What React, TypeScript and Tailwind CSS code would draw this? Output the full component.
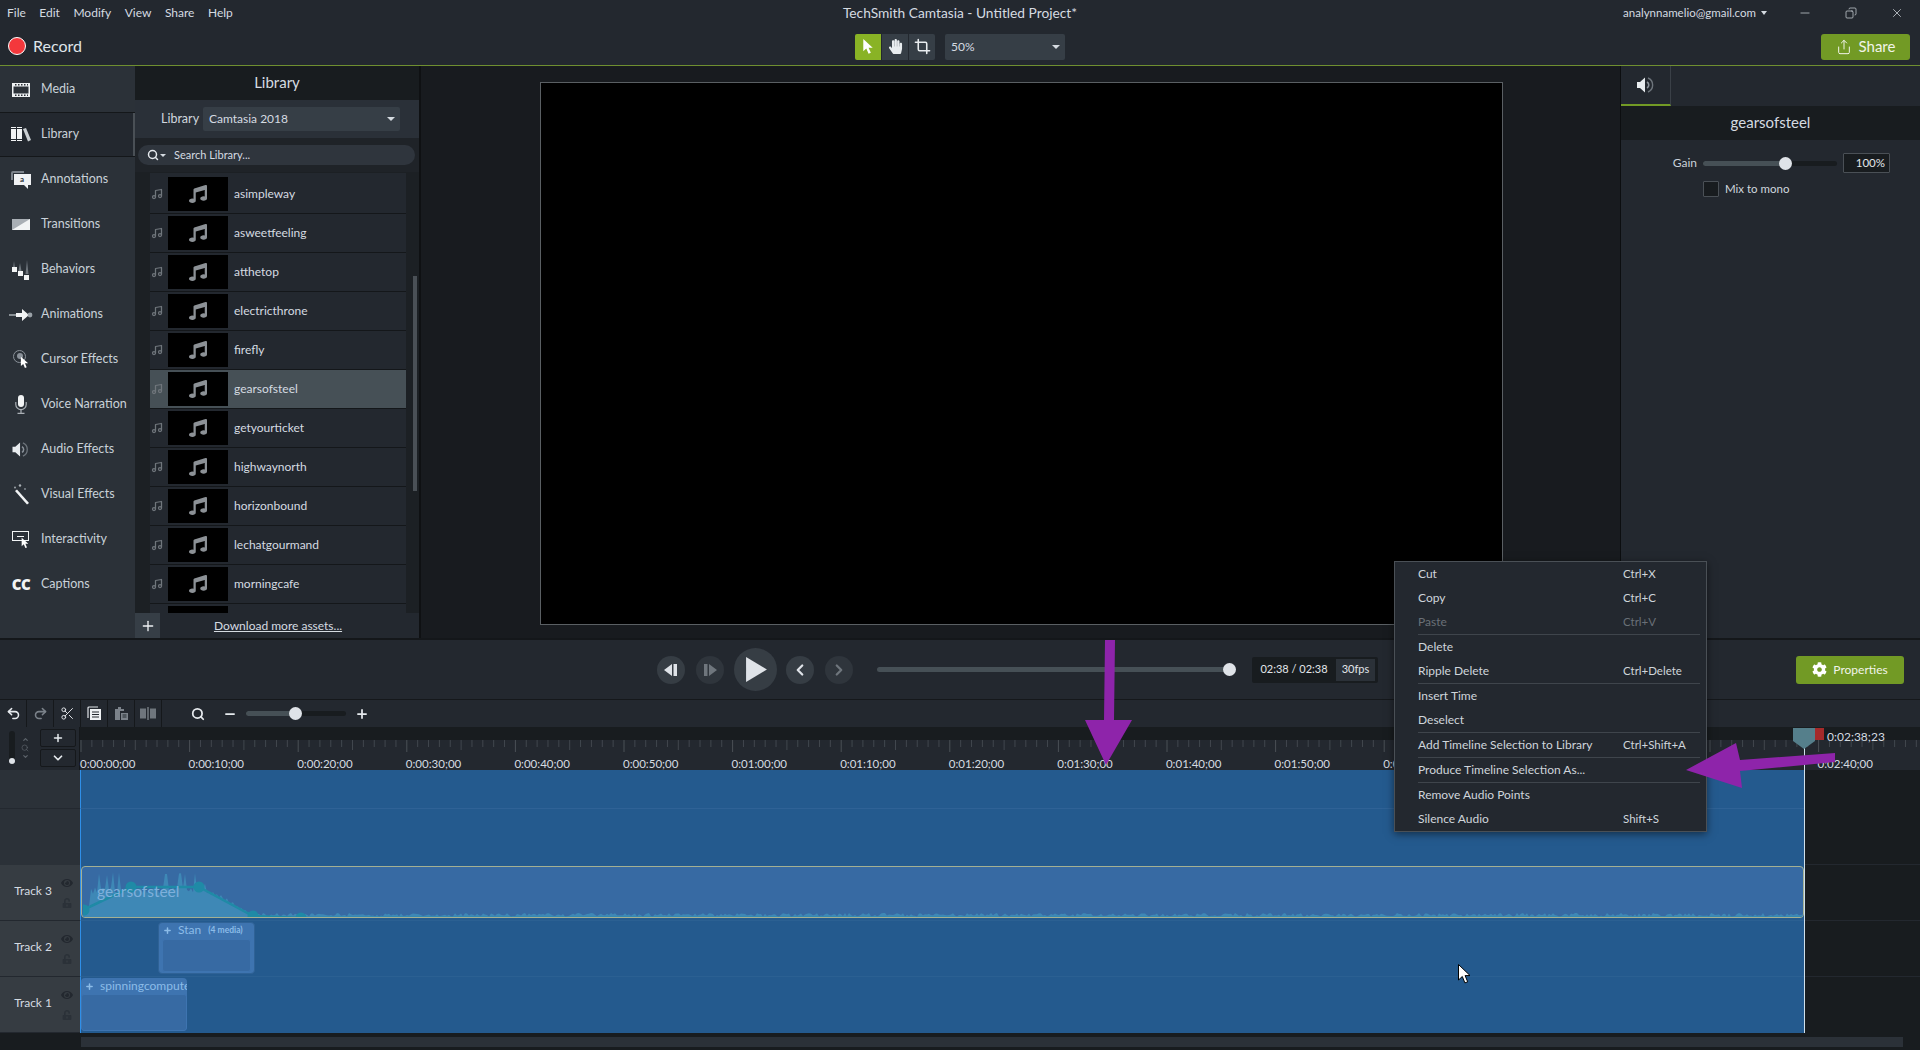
import { Crop, Search, Minus, Plus, ChevronDown, Undo2, Redo2, Scissors, Music, Share, X, Copy, ChevronLeft, ChevronRight, ChevronUp } from "lucide-react";
import { FaMusic, FaCog, FaHandPaper, FaEye, FaUnlockAlt } from "react-icons/fa";

const MENU = ["File", "Edit", "Modify", "View", "Share", "Help"];
const TRACKS_LIB = ["asimpleway", "asweetfeeling", "atthetop", "electricthrone", "firefly", "gearsofsteel", "getyourticket", "highwaynorth", "horizonbound", "lechatgourmand", "morningcafe", ""];
const RULER = ["0:00:00;00", "0:00:10;00", "0:00:20;00", "0:00:30;00", "0:00:40;00", "0:00:50;00", "0:01:00;00", "0:01:10;00", "0:01:20;00", "0:01:30;00", "0:01:40;00", "0:01:50;00", "0:02:00;00", "0:02:10;00", "0:02:20;00", "0:02:30;00", "0:02:40;00"];

const CTX: { label: string; keys?: string; off?: boolean; sep?: boolean }[] = [
  { label: "Cut", keys: "Ctrl+X" },
  { label: "Copy", keys: "Ctrl+C" },
  { label: "Paste", keys: "Ctrl+V", off: true, sep: true },
  { label: "Delete" },
  { label: "Ripple Delete", keys: "Ctrl+Delete", sep: true },
  { label: "Insert Time" },
  { label: "Deselect", sep: true },
  { label: "Add Timeline Selection to Library", keys: "Ctrl+Shift+A", sep: true },
  { label: "Produce Timeline Selection As...", sep: true },
  { label: "Remove Audio Points" },
  { label: "Silence Audio", keys: "Shift+S" },
];

function Cursor({ className }: { className?: string }) {
  return (
    <svg viewBox="0 0 12 18" className={className}>
      <path d="M1 1v13l3.2-3 2.4 5.6 2.4-1-2.4-5.4H11z" fill="#fff" />
    </svg>
  );
}

function Speaker({ className }: { className?: string }) {
  return (
    <svg viewBox="0 0 20 18" className={className}>
      <path d="M1 6h3l5-4.5v15L4 12H1z" fill="#e8ecef" />
      <path d="M11 6a3.4 3.4 0 0 1 0 6" fill="none" stroke="#8a9199" strokeWidth="1.6" />
      <path d="M12 2a7.6 7.6 0 0 1 0 14" fill="none" stroke="#6d747b" strokeWidth="1.4" />
    </svg>
  );
}

const SIDE_ICONS: Record<string, React.ReactNode> = {
  Media: (
    <svg viewBox="0 0 18 14" className="w-[18px] h-[14px]">
      <path fillRule="evenodd" d="M0 0h18v14H0zM1.5 3.5v7h15v-7z" fill="#eef1f3" />
      <path d="M3 1h1.5v1.5H3zM6 1h1.5v1.5H6zM9 1h1.5v1.5H9zM12 1h1.5v1.5H12zM15 1h1v1.5h-1zM3 11.5h1.5V13H3zM6 11.5h1.5V13H6zM9 11.5h1.5V13H9zM12 11.5h1.5V13H12zM15 11.5h1V13h-1z" fill="#2b3138" />
    </svg>
  ),
  Library: (
    <svg viewBox="0 0 20 15" className="w-[20px] h-[15px]">
      <path d="M0 2h5v10H0zM6 2h5v10H6z" fill="#f2f4f5" />
      <path d="M0 0h5v1H0zM6 0h5v1H6zM0 13h5v1H0zM6 13h5v1H6z" fill="#f2f4f5" />
      <path d="M12 2l3-1 5 12-3 1.4z" fill="#c9ced2" />
    </svg>
  ),
  Annotations: (
    <svg viewBox="0 0 20 18" className="w-[20px] h-[18px]">
      <path d="M0 2a2 2 0 0 1 2-2h11v2H2v7H0z" fill="#7b828a" />
      <path d="M3 3h17v11h-3v4l-4-4H3z" fill="#f0f2f4" />
      <text x="9" y="11" fontSize="8" fontFamily="Lato" fill="#2b3138" fontWeight="700">a</text>
    </svg>
  ),
  Transitions: (
    <svg viewBox="0 0 18 11" className="w-[18px] h-[11px]">
      <path d="M0 0h18v11H0z" fill="#a9afb5" />
      <path d="M18 0v11H0z" fill="#f2f4f5" />
    </svg>
  ),
  Behaviors: (
    <svg viewBox="0 0 18 22" className="w-[18px] h-[22px]">
      <path d="M2 2l1 7H1zM8 4l1.5 8h-3zM15 1l1.5 14h-3z" fill="#6e757c" />
      <rect x="0" y="8" width="5" height="5" fill="#f2f4f5" />
      <rect x="6" y="12" width="5" height="5" fill="#f2f4f5" />
      <rect x="12" y="16" width="5" height="5" fill="#f2f4f5" />
    </svg>
  ),
  Animations: (
    <svg viewBox="0 0 24 12" className="w-[24px] h-[12px]">
      <path d="M0 6h12" stroke="#aab0b5" strokeWidth="1.5" />
      <path d="M7 4h6V0l7 6-7 6V8H7z" fill="#f2f4f5" />
      <circle cx="21" cy="6" r="2.4" fill="#9aa1a7" />
    </svg>
  ),
  "Cursor Effects": (
    <div className="relative w-[16px] h-[20px]">
      <div className="absolute top-0 left-0 w-[13px] h-[13px] rounded-full border border-[#8a9199] flex items-center justify-center">
        <div className="w-[6px] h-[6px] rounded-full bg-[#8a9199]" />
      </div>
      <Cursor className="absolute left-[7px] top-[6px] w-[9px] h-[13px]" />
    </div>
  ),
  "Voice Narration": (
    <svg viewBox="0 0 12 19" className="w-[12px] h-[19px]">
      <rect x="3" y="0" width="6" height="12" rx="3" fill="#f2f4f5" />
      <path d="M.8 7v2.5a5.2 5.2 0 0 0 10.4 0V7" fill="none" stroke="#aab0b5" strokeWidth="1.2" />
      <path d="M6 15v3M2.5 18.4h7" stroke="#aab0b5" strokeWidth="1.2" />
    </svg>
  ),
  "Audio Effects": <Speaker className="w-[20px] h-[17px]" />,
  "Visual Effects": (
    <svg viewBox="0 0 17 21" className="w-[17px] h-[21px]">
      <path d="M2 7l2-1.5L16 19l-2 1.5z" fill="#f2f4f5" />
      <circle cx="7" cy="1.5" r="1.2" fill="#aab0b5" />
      <circle cx="2" cy="3.5" r=".9" fill="#aab0b5" />
      <circle cx="12" cy="5" r=".9" fill="#8a9199" />
    </svg>
  ),
  Interactivity: (
    <div className="relative w-[18px] h-[18px]">
      <div className="absolute top-0 left-0 w-[17px] h-[10px] border border-[#f2f4f5] flex justify-center">
        <div className="w-[7px] h-px bg-[#f2f4f5] mt-[4px]" />
      </div>
      <Cursor className="absolute left-[9px] top-[6px] w-[8px] h-[12px]" />
    </div>
  ),
  Captions: <span className="text-[15px] font-black tracking-tight text-[#f2f4f5] leading-none [font-family:'Open_Sans',sans-serif]">CC</span>,
};

const SIDE_ITEMS = ["Media", "Library", "Annotations", "Transitions", "Behaviors", "Animations", "Cursor Effects", "Voice Narration", "Audio Effects", "Visual Effects", "Interactivity", "Captions"];

function Sidebar() {
  return (
    <div className="w-[135px] bg-[#2b3138] flex flex-col shrink-0 pt-[1px]">
      {SIDE_ITEMS.map((it) => (
        <div
          key={it}
          className={`h-[45px] flex items-center relative ${it === "Library" ? "bg-[#23282f] border-y border-[#14171a]" : ""}`}
        >
          <div className="w-[41px] flex justify-center pl-[1px]">{SIDE_ICONS[it]}</div>
          <span className="text-[12.5px] text-[#c9d1d9]">{it}</span>
          {it === "Library" && <div className="absolute right-0 top-0 bottom-0 w-[2px] bg-[#4a5056]" />}
        </div>
      ))}
    </div>
  );
}

function LibraryPanel() {
  return (
    <div className="w-[285px] shrink-0 flex flex-col bg-[#1c2024] border-r border-[#0f1113]">
      <div className="h-[34px] bg-[#181c1f] flex items-center justify-center text-[15px] text-[#d5dbe1] pb-[1px]">Library</div>
      <div className="h-[38px] bg-[#2a3038] flex items-center pl-[26px]">
        <span className="text-[12.5px] text-[#d0d7de] w-[42px]">Library</span>
        <div className="w-[197px] h-[24px] rounded-[2px] bg-[#363e46] flex items-center justify-between pl-[6px] pr-[5px] text-[12px] text-[#d5dbe1]">
          Camtasia 2018
          <div className="w-0 h-0 border-x-4 border-x-transparent border-t-[4px] border-t-[#d5dbe1]" />
        </div>
      </div>
      <div className="h-[34px] flex items-center pl-[3px] pr-[4px] bg-[#1f2328]">
        <div className="h-[20px] w-full rounded-full bg-[#2f353d] flex items-center pl-[9px] text-[11px] text-[#d5dbe1]">
          <Search className="w-[12px] h-[12px] text-[#e6eaee]" strokeWidth={3} />
          <div className="w-0 h-0 border-x-[3px] border-x-transparent border-t-[3px] border-t-[#d5dbe1] ml-[1px] mr-[8px]" />
          Search Library...
        </div>
      </div>
      <div className="flex-1 flex min-h-0 pt-[1px]">
        <div className="w-[15px]" />
        <div className="w-[256px] flex flex-col overflow-hidden">
          <div className="h-[2px] bg-[#23282f] shrink-0" />
          {TRACKS_LIB.map((t) => (
            <div
              key={t}
              className={`h-[39px] shrink-0 flex items-center border-b border-[#14171a] ${t === "gearsofsteel" ? "bg-[#465056]" : "bg-[#23282f]"}`}
            >
              <Music className="w-[12px] h-[12px] text-[#70767c] ml-[1px] mr-[5px]" strokeWidth={2.5} />
              <div className="w-[60px] h-[34px] bg-black flex items-center justify-center">
                <FaMusic className="w-[18px] h-[18px] text-[#8c9196]" />
              </div>
              <span className="ml-[6px] text-[12px] text-[#d5dbe1]">{t}</span>
            </div>
          ))}
        </div>
        <div className="w-[13px] flex justify-center">
          <div className="w-[4px] h-[215px] mt-[103px] ml-[4px] bg-[#4a5056]" />
        </div>
      </div>
      <div className="h-[25px] flex items-center bg-[#23282f] shrink-0">
        <div className="w-[25px] h-full bg-[#363e46] flex items-center justify-center">
          <Plus className="w-[16px] h-[16px] text-[#eef1f3]" strokeWidth={2} />
        </div>
        <div className="flex-1 flex justify-center pr-[23px] text-[12px] text-[#d5dbe1] underline">Download more assets...</div>
      </div>
    </div>
  );
}

function Preview() {
  return (
    <div className="flex-1 bg-[#181b1f] border-l border-[#0f1113] pt-[16px] pl-[119px]">
      <div className="w-[963px] h-[543px] bg-black border border-[#5a5f63]" />
    </div>
  );
}

function RightPanel() {
  return (
    <div className="w-[300px] shrink-0 flex flex-col bg-[#23282f] border-l border-[#0c0e10]">
      <div className="h-[40px] flex">
        <div className="w-[50px] h-[40px] border-b-2 border-[#729a25] border-r border-r-[#3a4047] flex items-center justify-center">
          <Speaker className="w-[22px] h-[18px]" />
        </div>
      </div>
      <div className="h-[34px] bg-[#181c1f] flex items-center justify-center text-[15px] text-[#d5dbe1] pb-[2px]">gearsofsteel</div>
      <div className="flex items-center mt-[13px] h-[20px]">
        <span className="w-[76px] text-right text-[12px] text-[#c9d1d9]">Gain</span>
        <div className="ml-[6px] w-[134px] h-[5px] rounded-full bg-[#181c1f] relative">
          <div className="w-[82px] h-[5px] rounded-full bg-[#465056]" />
          <div className="absolute left-[76px] top-[-4px] w-[13px] h-[13px] rounded-full bg-[#dfe3e8]" />
        </div>
        <div className="ml-[6px] w-[47px] h-[20px] bg-[#181c1f] border border-[#4a5056] rounded-[1px] flex items-center justify-end pr-[4px] text-[11.5px] text-[#e2e6ea]">100%</div>
      </div>
      <div className="flex items-center mt-[7px] pl-[82px]">
        <div className="w-[16px] h-[16px] bg-[#181c1f] border border-[#4a5056] rounded-[1px]" />
        <span className="ml-[6px] text-[11.5px] text-[#d0d7de]">Mix to mono</span>
      </div>
    </div>
  );
}

function Round({ size, dim, children }: { size: string; dim?: boolean; children: React.ReactNode }) {
  return (
    <div className={`${size} rounded-full flex items-center justify-center ${dim ? "bg-[#2f353c]" : "bg-[#363d44]"}`}>
      {children}
    </div>
  );
}

function Controls() {
  return (
    <div className="h-[62px] border-t-2 border-[#14171a] flex items-center pl-[657px] border-b border-b-[#15181b] relative">
      <Round size="w-[28px] h-[28px]">
        <svg viewBox="0 0 14 14" className="w-[14px] h-[14px]"><path d="M8 1v12L0 7z M9.5 1H13v12H9.5z" fill="#dfe3e8" /></svg>
      </Round>
      <div className="w-[11px]" />
      <Round size="w-[28px] h-[28px]" dim>
        <svg viewBox="0 0 14 14" className="w-[14px] h-[14px]"><path d="M6 1v12l8-6z M1 1h3.5v12H1z" fill="#6f767d" /></svg>
      </Round>
      <div className="w-[10px]" />
      <Round size="w-[43px] h-[43px]">
        <svg viewBox="0 0 20 24" className="w-[21px] h-[25px] ml-[2px]"><path d="M0 0v24l20-12z" fill="#dfe3e8" /></svg>
      </Round>
      <div className="w-[9px]" />
      <Round size="w-[28px] h-[28px]">
        <ChevronLeft className="w-[18px] h-[18px] text-[#dfe3e8]" strokeWidth={3} />
      </Round>
      <div className="w-[11px]" />
      <Round size="w-[28px] h-[28px]" dim>
        <ChevronRight className="w-[18px] h-[18px] text-[#6f767d]" strokeWidth={3} />
      </Round>
      <div className="ml-[24px] w-[353px] h-[5px] rounded-full bg-[#465056] relative">
        <div className="absolute right-[-6px] top-[-4px] w-[13px] h-[13px] rounded-full bg-[#dfe3e8]" />
      </div>
      <div className="ml-[22px] w-[126px] h-[26px] bg-[#181c1f] rounded-[2px] flex items-center text-[11px] text-[#e2e6ea]">
        <span className="w-[84px] text-center">02:38 / 02:38</span>
        <span className="w-[39px] h-[22px] bg-[#2b3138] flex items-center justify-center">30fps</span>
      </div>
      <div className="ml-[418px] w-[108px] h-[28px] rounded-[3px] bg-[#729a25] flex items-center justify-center text-[12px] text-[#f1f4ea]">
        <FaCog className="w-[15px] h-[15px] mr-[6px] text-white" />
        Properties
      </div>
    </div>
  );
}

function ToolBtn({ children }: { children: React.ReactNode }) {
  return <div className="w-[27px] h-full border-r border-[#15181b] flex items-center justify-center">{children}</div>;
}

function TimelineTools() {
  return (
    <div className="h-[27px] flex items-center">
      <ToolBtn><Undo2 className="w-[15px] h-[15px] text-[#e6eaee]" strokeWidth={2.5} /></ToolBtn>
      <ToolBtn><Redo2 className="w-[15px] h-[15px] text-[#7b828a]" strokeWidth={2.5} /></ToolBtn>
      <ToolBtn><Scissors className="w-[15px] h-[15px] text-[#e6eaee]" strokeWidth={1.5} /></ToolBtn>
      <ToolBtn>
        <svg viewBox="0 0 15 15" className="w-[15px] h-[15px]">
          <path d="M1 12V2a1 1 0 0 1 1-1h9" fill="none" stroke="#dfe3e8" strokeWidth="1.2" />
          <path d="M3 3h11v11H3z" fill="#eef1f3" />
          <path d="M5 6h7M5 8.5h7M5 11h7" stroke="#23282f" strokeWidth="1.2" />
        </svg>
      </ToolBtn>
      <ToolBtn>
        <svg viewBox="0 0 15 15" className="w-[15px] h-[15px]">
          <path d="M1 3h3V1h3v2h3v2H1zM1 5h5v9H1z" fill="#7b828a" />
          <path d="M7 7h7v7H7z" fill="#7b828a" />
          <path d="M8.5 9h4M8.5 11h4" stroke="#23282f" strokeWidth="1" />
        </svg>
      </ToolBtn>
      <ToolBtn>
        <svg viewBox="0 0 16 13" className="w-[16px] h-[13px]">
          <path d="M0 1.5h6v10H0zM10 1.5h6v10h-6z" fill="#6f767d" />
          <path d="M8 0v13" stroke="#9aa1a7" strokeWidth="1" />
        </svg>
      </ToolBtn>
      <Search className="ml-[29px] w-[14px] h-[14px] text-[#e6eaee]" strokeWidth={3} />
      <Minus className="ml-[18px] w-[14px] h-[14px] text-[#e6eaee]" strokeWidth={3} />
      <div className="ml-[9px] w-[100px] h-[5px] rounded-full bg-[#181c1f] relative">
        <div className="w-[50px] h-[5px] rounded-full bg-[#465056]" />
        <div className="absolute left-[43px] top-[-4px] w-[13px] h-[13px] rounded-full bg-[#dfe3e8]" />
      </div>
      <Plus className="ml-[9px] w-[14px] h-[14px] text-[#e6eaee]" strokeWidth={3} />
    </div>
  );
}

function Ruler() {
  const ticks = Array.from({ length: 170 }, (_, i) => i);
  return (
    <div className="h-[43px] flex">
      <div className="w-[80px] shrink-0 flex pt-[2px] border-r border-[#15181b]">
        <div className="w-[36px] flex pl-[9px]">
          <div className="w-[6px] h-[32px] mt-[2px] rounded-full bg-[#181c1f] relative">
            <div className="absolute left-[0px] bottom-[-1px] w-[6px] h-[6px] rounded-full bg-[#dfe3e8]" />
          </div>
          <div className="ml-[6px] mt-[7px] flex flex-col items-center text-[#5d646b]">
            <ChevronUp className="w-[7px] h-[7px]" strokeWidth={4} />
            <Search className="w-[8px] h-[8px] my-[1px]" strokeWidth={2} />
            <ChevronDown className="w-[7px] h-[7px]" strokeWidth={4} />
          </div>
        </div>
        <div className="flex flex-col gap-[2px] pl-[4px]">
          <div className="w-[36px] h-[18px] border border-[#15181b] rounded-[2px] flex items-center justify-center">
            <Plus className="w-[12px] h-[12px] text-[#e6eaee]" strokeWidth={3} />
          </div>
          <div className="w-[36px] h-[18px] border border-[#15181b] rounded-[2px] flex items-center justify-center">
            <ChevronDown className="w-[14px] h-[14px] text-[#e6eaee]" strokeWidth={3} />
          </div>
        </div>
      </div>
      <div className="flex-1 flex flex-col min-w-0">
        <div className="h-[13px] bg-[#181c1f]" />
        <svg width="1839" height="12" className="block">
          {ticks.map((i) => {
            const x = i * 10.86 + 1;
            const big = i % 10 === 0;
            const mid = i % 5 === 0;
            return <line key={i} x1={x} x2={x} y1={0} y2={big ? 12 : mid ? 10 : 7} stroke={big ? "#4a5056" : "#41474e"} strokeWidth="1" />;
          })}
        </svg>
        <div className="flex text-[11.5px] leading-none text-[#d5dbe1] pt-[6px]">
          {RULER.map((r) => (
            <div key={r} className="w-[108.6px] shrink-0">{r}</div>
          ))}
        </div>
      </div>
    </div>
  );
}

function Waveform() {
  const W = 1720;
  const H = 50;
  let d = `M0 ${H}`;
  for (let i = 0; i <= W; i += 2) {
    const n = Math.abs(Math.sin(i * 12.9898) * 43758.5453) % 1;
    let amp = 1.5 + n * 3.5;
    if (i < 8) amp = 6 + n * 8;
    else if (i < 115) amp = 24 + n * 8 + (n > 0.85 ? n * 14 : 0);
    else if (i < 170) amp = ((170 - i) / 55) * (26 + n * 10) + 3;
    d += `L${i} ${H - amp}`;
  }
  d += `L${W} ${H}Z`;
  return (
    <svg width={W} height={H + 2} className="absolute left-[1px] top-[1px] overflow-hidden">
      <path d={d} fill="#3e88b6" />
      <path d="M0 42L48 19L116 19L170 48L218 50L1720 50" fill="none" stroke="#1f8aa6" strokeWidth="2.5" />
      <circle cx="1" cy="42" r="5.5" fill="#1f8aa6" />
      <circle cx="48" cy="19" r="5.5" fill="#1f8aa6" />
      <circle cx="116" cy="19" r="5.5" fill="#1f8aa6" />
      <circle cx="170" cy="48" r="5.5" fill="#1f8aa6" />
      <circle cx="218" cy="50" r="5.5" fill="#1f8aa6" />
    </svg>
  );
}

function TrackHead({ name }: { name: string }) {
  return (
    <div className="w-[80px] shrink-0 h-full bg-[#363c42] border-b border-[#23282f] flex items-center">
      <span className="w-[58px] text-right pr-[6px] pb-[4px] text-[12px] text-[#d5dbe1]">{name}</span>
      <div className="flex flex-col items-center gap-[9px] w-[18px]">
        <FaEye className="w-[12px] h-[12px] text-[#23282f]" />
        <FaUnlockAlt className="w-[10px] h-[10px] text-[#2b3138]" />
      </div>
    </div>
  );
}

function Tracks() {
  return (
    <div className="h-[263px] flex flex-col">
      <div className="h-[39px] flex shrink-0">
        <div className="w-[80px] bg-[#2b3138] border-b border-[#23282f]" />
        <div className="w-[1724px] bg-[#245a8e] border-l border-[#2f8fe8] border-b border-b-[#2f6296]" />
        <div className="flex-1 bg-[#181c1f]" />
      </div>
      <div className="h-[56px] flex shrink-0">
        <div className="w-[80px] bg-[#2b3138]" />
        <div className="w-[1724px] bg-[#245a8e] border-l border-[#2f8fe8]" />
        <div className="flex-1 bg-[#181c1f] border-b border-[#23282f]" />
      </div>
      <div className="h-[56px] flex shrink-0">
        <TrackHead name="Track 3" />
        <div className="w-[1724px] bg-[#245a8e] border-l border-[#2f8fe8] border-b border-b-[#2b6092] pt-[1px]">
          <div className="relative w-[1723px] h-[52px] bg-[#376aa3] border border-[#a3b093] rounded-[4px] overflow-hidden">
            <Waveform />
            <span className="absolute left-[15px] top-[17px] text-[15.5px] leading-none text-[#7fb0dc]">gearsofsteel</span>
          </div>
        </div>
        <div className="flex-1 bg-[#181c1f] border-b border-[#23282f]" />
      </div>
      <div className="h-[56px] flex shrink-0">
        <TrackHead name="Track 2" />
        <div className="w-[1724px] bg-[#245a8e] border-l border-[#2f8fe8] border-b border-b-[#2b6092] pl-[77px] pt-[1px]">
          <div className="w-[97px] h-[52px] rounded-[4px] bg-[#3e74b0] flex flex-col border border-[#2f6296]">
            <div className="h-[14px] flex items-center pl-[4px] text-[#8cbce8]">
              <Plus className="w-[9px] h-[9px]" strokeWidth={4} />
              <span className="ml-[6px] text-[12px] leading-none">Stan</span>
              <span className="ml-[7px] text-[8.5px] leading-none font-bold">(4 media)</span>
            </div>
            <div className="flex-1 mt-[2px] mx-[3px] mb-[1px] rounded-[3px] bg-[#376aa3] border border-[#3e74b0]" />
          </div>
        </div>
        <div className="flex-1 bg-[#181c1f] border-b border-[#23282f]" />
      </div>
      <div className="h-[56px] flex shrink-0">
        <TrackHead name="Track 1" />
        <div className="w-[1724px] bg-[#245a8e] border-l border-[#2f8fe8] pt-[1px]">
          <div className="w-[106px] h-[53px] rounded-[4px] bg-[#3e74b0] flex flex-col overflow-hidden">
            <div className="h-[16px] flex items-center pl-[4px] text-[#8cbce8] whitespace-nowrap">
              <Plus className="w-[9px] h-[9px] shrink-0" strokeWidth={4} />
              <span className="ml-[6px] text-[12px] leading-none">spinningcomputer</span>
            </div>
            <div className="flex-1 rounded-[3px] bg-[#376aa3] border border-[#3e74b0]" />
          </div>
        </div>
        <div className="flex-1 bg-[#181c1f]" />
      </div>
    </div>
  );
}

function ContextMenu() {
  return (
    <div className="absolute left-[1394px] top-[561px] w-[313px] h-[271px] bg-[#23282f] border border-[#4a5056] shadow-[0_2px_8px_rgba(0,0,0,0.5)]">
      {CTX.map((c) => (
        <div key={c.label}>
          <div className={`h-[24px] flex items-center pl-[23px] pb-[1px] text-[12px] ${c.off ? "text-[#6a7077]" : "text-[#cfd5db]"}`}>
            <span className="w-[205px]">{c.label}</span>
            <span className="text-[11.5px]">{c.keys}</span>
          </div>
          {c.sep && <div className="h-px bg-[#3f454c] ml-[23px] mr-[6px]" />}
        </div>
      ))}
    </div>
  );
}

function Arrows() {
  return (
    <svg width="1920" height="1050" className="absolute left-0 top-0 pointer-events-none">
      <path d="M1105 640H1115L1114 720H1132L1106 765L1085 720H1104Z" fill="#8e24aa" />
      <path d="M1686 770L1736 743L1740 760L1835 753L1835 762L1740 771L1742 788Z" fill="#8e24aa" />
    </svg>
  );
}

export default function App() {
  return (
    <div className="w-[1920px] h-[1050px] relative overflow-hidden bg-[#23282f] flex flex-col [font-family:Lato,sans-serif]">
      <div className="h-[26px] grid grid-cols-[1fr_auto_1fr] items-center text-[#d5dbe1]">
        <div className="flex pl-[7px] gap-[13.5px] text-[12px]">
          {MENU.map((m) => <span key={m}>{m}</span>)}
        </div>
        <div className="text-[13.75px]">TechSmith Camtasia - Untitled Project*</div>
        <div className="flex items-center justify-end text-[#d5dbe1]">
          <span className="text-[11.5px]">analynnamelio@gmail.com</span>
          <div className="ml-[5px] w-0 h-0 border-x-[3.5px] border-x-transparent border-t-[4px] border-t-[#d5dbe1]" />
          <Minus className="ml-[31px] w-[14px] h-[14px]" strokeWidth={1.2} />
          <Copy className="ml-[33px] w-[12px] h-[12px] -scale-x-100" strokeWidth={1.4} />
          <X className="ml-[33px] mr-[16px] w-[14px] h-[14px]" strokeWidth={1.3} />
        </div>
      </div>
      <div className="h-[40px] grid grid-cols-[1fr_auto_1fr] items-center border-b border-[#6f8f30] pt-[1px]">
        <div className="flex items-center pl-[8px]">
          <div className="w-[18px] h-[18px] rounded-full bg-[#f4383c] border border-white" />
          <span className="ml-[7px] text-[16px] text-[#dfe4e9]">Record</span>
        </div>
        <div className="flex items-center mt-[1px]">
          <div className="w-[26px] h-[26px] rounded-l-[2px] bg-[#89b325] flex items-center justify-center">
            <Cursor className="w-[12px] h-[17px]" />
          </div>
          <div className="ml-px w-[26px] h-[26px] bg-[#363e46] flex items-center justify-center">
            <FaHandPaper className="w-[15px] h-[15px] text-[#e8ecef]" />
          </div>
          <div className="ml-px w-[26px] h-[26px] rounded-r-[2px] bg-[#363e46] flex items-center justify-center">
            <Crop className="w-[17px] h-[17px] text-[#e8ecef]" strokeWidth={2.2} />
          </div>
          <div className="ml-[10px] w-[120px] h-[26px] rounded-[2px] bg-[#363e46] flex items-center justify-between pl-[6px] pr-[5px] text-[12px] text-[#d5dbe1]">
            50%
            <div className="w-0 h-0 border-x-4 border-x-transparent border-t-[4px] border-t-[#d5dbe1]" />
          </div>
        </div>
        <div className="flex justify-end pr-[10px] mt-[1px]">
          <div className="w-[89px] h-[26px] rounded-[3px] bg-[#729a25] flex items-center justify-center text-[15px] text-[#f1f4ea]">
            <Share className="w-[16px] h-[16px] mr-[7px]" strokeWidth={1.5} />
            Share
          </div>
        </div>
      </div>
      <div className="h-[572px] flex">
        <Sidebar />
        <LibraryPanel />
        <Preview />
        <RightPanel />
      </div>
      <Controls />
      <TimelineTools />
      <Ruler />
      <Tracks />
      <div className="flex-1 bg-[#181c1f] pt-[4px] pl-[81px]">
        <div className="w-[1822px] h-[10px] bg-[#2b3138]" />
      </div>

      <div className="absolute left-[1804px] top-[745px] h-[288px] w-px bg-[#cfe0ea]" />
      <svg viewBox="0 0 22 21" className="absolute left-[1793px] top-[728px] w-[22px] h-[21px]">
        <path d="M0 0H22V13L11 21L0 13Z" fill="#557f8b" />
      </svg>
      <div className="absolute left-[1815px] top-[728px] w-[9px] h-[12px] bg-[#a52a2a]" />
      <span className="absolute left-[1827px] top-[728px] text-[12px] text-[#d5dbe1]">0:02:38;23</span>

      <ContextMenu />
      <Arrows />
      <svg viewBox="0 0 12 20" className="absolute left-[1458px] top-[964px] w-[12px] h-[20px]">
        <path d="M.5.5v15.5l3.8-3.5 2.6 6.4 2.8-1.1-2.6-6.2h5z" fill="#fff" stroke="#000" strokeWidth="1" />
      </svg>
    </div>
  );
}
